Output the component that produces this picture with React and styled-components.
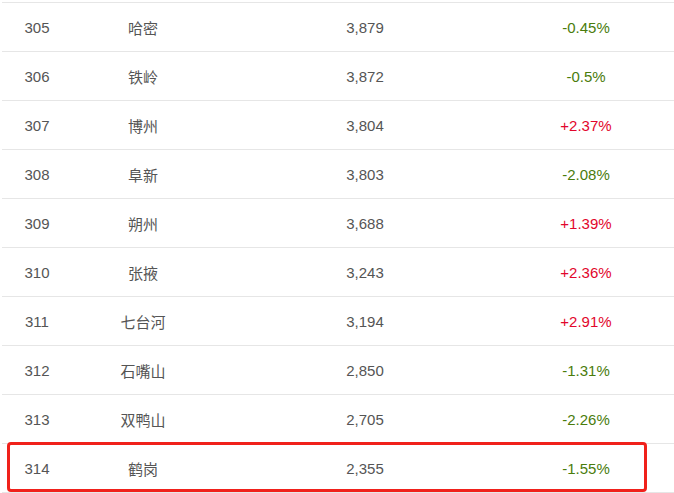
import React from 'react'
import styled, { createGlobalStyle } from 'styled-components'

const GlobalStyle = createGlobalStyle`
  html, body {
    margin: 0;
    padding: 0;
    background: #fff;
  }
  body {
    font-family: "Liberation Sans", "Noto Sans CJK SC", sans-serif;
  }
`

const rows = [
  { rank: 305, city: '哈密', count: '3,879', change: '-0.45%' },
  { rank: 306, city: '铁岭', count: '3,872', change: '-0.5%' },
  { rank: 307, city: '博州', count: '3,804', change: '+2.37%' },
  { rank: 308, city: '阜新', count: '3,803', change: '-2.08%' },
  { rank: 309, city: '朔州', count: '3,688', change: '+1.39%' },
  { rank: 310, city: '张掖', count: '3,243', change: '+2.36%' },
  { rank: 311, city: '七台河', count: '3,194', change: '+2.91%' },
  { rank: 312, city: '石嘴山', count: '2,850', change: '-1.31%' },
  { rank: 313, city: '双鸭山', count: '2,705', change: '-2.26%' },
  { rank: 314, city: '鹤岗', count: '2,355', change: '-1.55%', marked: true },
]

export default function App() {
  return (
    <>
      <GlobalStyle />
      <Page>
        <Table>
          {rows.map((r) => (
            <Row key={r.rank}>
              <Cell>{r.rank}</Cell>
              <Cell>{r.city}</Cell>
              <Cell>{r.count}</Cell>
              <Change up={r.change.startsWith('+')}>{r.change}</Change>
              <Cell />
              {r.marked && <Highlight />}
            </Row>
          ))}
        </Table>
      </Page>
    </>
  )
}

const Page = styled.div`
  width: 674px;
  height: 493px;
  padding-top: 2px;
  padding-left: 2px;
  box-sizing: border-box;
  overflow: hidden;
`

const Table = styled.div`
  border-top: 1px solid #e6e6e6;
`

const Row = styled.div`
  position: relative;
  display: grid;
  grid-template-columns: 70px 142px 302px 140px 1fr;
  align-items: center;
  height: 48px;
  border-bottom: 1px solid #e6e6e6;
`

const Cell = styled.div`
  text-align: center;
  font-size: 15px;
  color: #555;
`

const Change = styled(Cell)`
  color: ${(p) => (p.up ? '#e2062c' : '#4a7c0c')};
`

const Highlight = styled.div`
  position: absolute;
  left: 5px;
  top: -2px;
  width: 640px;
  height: 50px;
  box-sizing: border-box;
  border: 3px solid #f0211b;
  border-radius: 4px;
  pointer-events: none;
`
